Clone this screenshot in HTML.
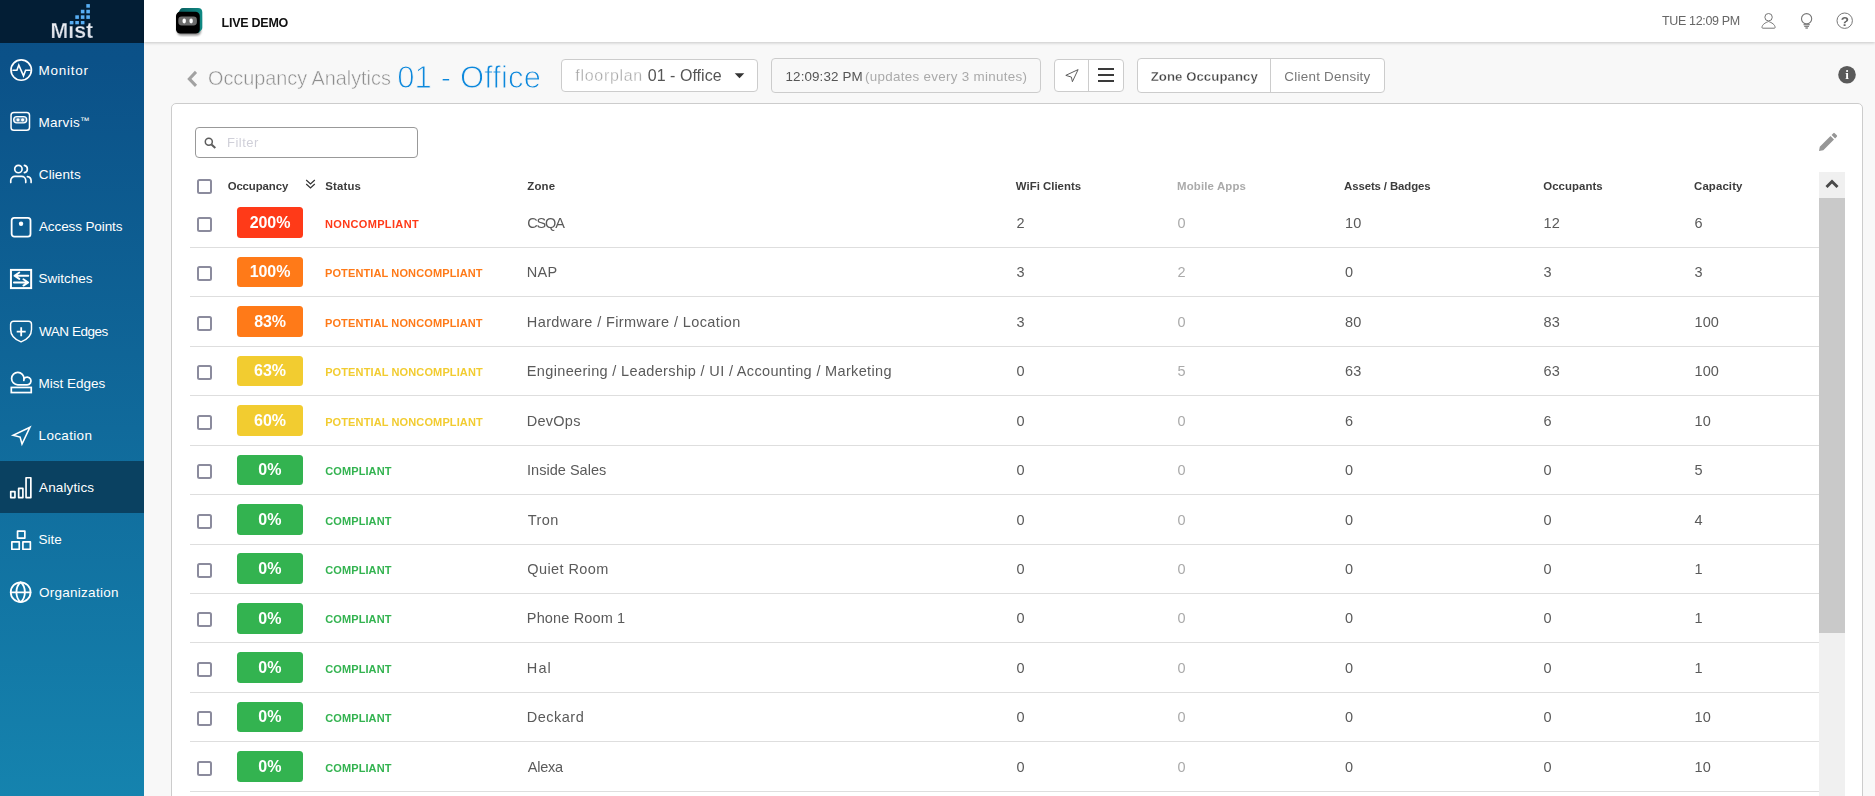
<!DOCTYPE html>
<html lang="en"><head><meta charset="utf-8"><title>Occupancy Analytics</title>
<style>
*{box-sizing:border-box;margin:0;padding:0}
html,body{width:1875px;height:796px;overflow:hidden;background:#f8f8f8;font-family:"Liberation Sans",sans-serif;color:#555}
body{position:relative}
#main{position:absolute;left:0;top:0;width:1875px;height:796px;will-change:transform}
.abs{position:absolute}
/* sidebar */
#side{position:absolute;left:0;top:0;width:144px;height:796px;background:linear-gradient(180deg,#0b5087 0px,#0b5188 60px,#1583ae 796px)}
#logo{position:absolute;left:0;top:0;width:144px;height:43px;background:#031e35}
.nav{position:absolute;left:0;width:144px;height:52.2px}
.nav.act{background:#0a4161}
.ni{position:absolute;left:10px;width:24px;height:24px;overflow:visible;fill:none;stroke:#fff;stroke-linejoin:round;stroke-linecap:round}
.nt{position:absolute;left:39px;top:19px;font-size:13.5px;line-height:16px;color:#fff;white-space:nowrap}
/* topbar */
#top{position:absolute;left:144px;top:0;width:1731px;height:42px;background:#fff;box-shadow:0 1px 3px rgba(0,0,0,.2)}
#live{position:absolute;left:222px;top:14.500px;font-size:12.500px;line-height:16px;font-weight:bold;color:#111;white-space:nowrap}
#clock{position:absolute;left:1662px;top:13px;font-size:12.5px;line-height:16px;color:#666;white-space:nowrap}
/* header row */
#ttl1{position:absolute;left:209px;top:65.1px;font-size:20.6px;line-height:26px;color:#8e8e8e;white-space:nowrap;-webkit-text-stroke:.5px #f8f8f8;transform:scaleX(.963);transform-origin:0 0}
#ttl2{position:absolute;left:398px;top:59.2px;font-size:31px;line-height:38px;color:#0c88dc;white-space:nowrap;-webkit-text-stroke:.95px #f8f8f8}
.box{position:absolute;border:1px solid #ccc;border-radius:4px;background:#fff}
.t{position:absolute;white-space:nowrap}
/* panel */
#panel{position:absolute;left:171px;top:103px;width:1692px;height:720px;background:#fff;border:1px solid #ccc;border-radius:5px}
#filter{position:absolute;left:195px;top:127px;width:223px;height:31px;border:1px solid #999;border-radius:4px;background:#fff}
.hd{position:absolute;top:179px;font-size:11.4px;line-height:14px;font-weight:bold;color:#3c3c3c;white-space:nowrap}
.cb{position:absolute;left:197px;width:15px;height:15px;border:2px solid #8b8b9d;border-radius:2.5px;background:#fff}
.row{position:absolute;left:0;width:1875px;height:50px}
.row:after{content:"";position:absolute;left:190px;width:1629px;bottom:0;height:1px;background:#dedede}
.badge{position:absolute;left:237px;top:9px;width:66px;height:31px;border-radius:3.5px;color:#fff;font-weight:bold;font-size:16px;line-height:31.4px;text-align:center;}
.st{position:absolute;left:325.5px;top:19.3px;font-size:11px;line-height:14px;font-weight:bold;white-space:nowrap}
.c{position:absolute;top:16.4px;font-size:14.5px;line-height:18px;color:#5a5a5a;white-space:nowrap}
.zone{left:527.5px}.wifi{left:1016.6px}.mob{left:1177.6px;color:#aaa}.ast{left:1345.1px}.occ{left:1543.6px}.cap{left:1694.6px}
#nt-monitor{letter-spacing:0.735px;margin-left:-0.50px}
#nt-marvis{letter-spacing:0.324px;margin-left:-0.63px}
#nt-clients{letter-spacing:0.101px;margin-left:-0.23px}
#nt-ap{letter-spacing:-0.105px;margin-left:-0.07px}
#nt-sw{letter-spacing:0.023px;margin-left:-0.61px}
#nt-wan{letter-spacing:-0.459px;margin-left:-0.02px}
#nt-me{letter-spacing:0.019px;margin-left:-0.58px}
#nt-loc{letter-spacing:0.321px;margin-left:-0.40px}
#nt-an{letter-spacing:0.113px;margin-left:0.09px}
#nt-site{letter-spacing:-0.008px;margin-left:-0.44px}
#nt-org{letter-spacing:0.268px;margin-left:-0.04px}
#live{letter-spacing:-0.247px;margin-left:-0.47px}
#clock{letter-spacing:-0.325px;margin-left:-0.13px}
#ttl1{letter-spacing:-0.008px;margin-left:-0.84px}
#ttl2{letter-spacing:0.135px;margin-left:-0.82px}
#fp{letter-spacing:0.690px;margin-left:-0.15px}
#ddo{letter-spacing:0.042px;margin-left:-0.30px}
#tm{letter-spacing:0.110px;margin-left:-0.45px}
#upd{letter-spacing:0.303px;margin-left:-0.63px}
#zo{letter-spacing:0.061px;margin-left:-0.32px}
#cd{letter-spacing:0.257px;margin-left:-0.67px}
#flt{letter-spacing:0.503px;margin-left:-1.07px}
#h-occ{letter-spacing:-0.100px;margin-left:-0.38px}
#h-st{letter-spacing:0.182px;margin-left:-0.28px}
#h-zone{letter-spacing:0.229px;margin-left:-0.25px}
#h-wifi{letter-spacing:0.012px;margin-left:-0.16px}
#h-mob{letter-spacing:0.161px;margin-left:-0.01px}
#h-ast{letter-spacing:-0.112px;margin-left:0.11px}
#h-occu{letter-spacing:0.053px;margin-left:0.32px}
#h-cap{letter-spacing:0.123px;margin-left:0.07px}
#s0{letter-spacing:0.350px;margin-left:-0.54px}
#s1{letter-spacing:0.121px;margin-left:-0.54px}
#s2{letter-spacing:0.121px;margin-left:-0.54px}
#s3{letter-spacing:0.123px;margin-left:-0.39px}
#s4{letter-spacing:0.123px;margin-left:-0.39px}
#z0{letter-spacing:-1.140px;margin-left:-0.26px}
#z1{letter-spacing:0.261px;margin-left:-0.66px}
#z2{letter-spacing:0.384px;margin-left:-0.66px}
#z3{letter-spacing:0.341px;margin-left:-0.66px}
#z4{letter-spacing:0.231px;margin-left:-0.66px}
#z5{letter-spacing:0.026px;margin-left:-0.53px}
#z6{letter-spacing:0.484px;margin-left:0.20px}
#z7{letter-spacing:0.424px;margin-left:-0.28px}
#z8{letter-spacing:0.146px;margin-left:-0.66px}
#z9{letter-spacing:1.068px;margin-left:-0.66px}
#z10{letter-spacing:0.485px;margin-left:-0.66px}
#z11{letter-spacing:-0.233px;margin-left:0.24px}
#s5{letter-spacing:0.089px;margin-left:-0.20px}
#s6{letter-spacing:0.089px;margin-left:-0.20px}
#s7{letter-spacing:0.089px;margin-left:-0.20px}
#s8{letter-spacing:0.089px;margin-left:-0.20px}
#s9{letter-spacing:0.089px;margin-left:-0.20px}
#s10{letter-spacing:0.089px;margin-left:-0.20px}
#s11{letter-spacing:0.089px;margin-left:-0.20px}
#b0{letter-spacing:-0.088px;margin-left:0.00px}
#b1{letter-spacing:-0.091px;margin-left:0.00px}
#b2{letter-spacing:-0.151px;margin-left:0.00px}
#b3{letter-spacing:-0.073px;margin-left:0.00px}
#b4{letter-spacing:-0.073px;margin-left:0.00px}
#b5{letter-spacing:0.182px;margin-left:0.00px}
#b6{letter-spacing:0.182px;margin-left:0.00px}
#b7{letter-spacing:0.182px;margin-left:0.00px}
#b8{letter-spacing:0.182px;margin-left:0.00px}
#b9{letter-spacing:0.182px;margin-left:0.00px}
#b10{letter-spacing:0.182px;margin-left:0.00px}
#b11{letter-spacing:0.182px;margin-left:0.00px}

</style></head><body>
<div id="side">
<div id="logo">
<svg class="abs" style="left:50px;top:3px;will-change:transform" width="48" height="40" viewBox="0 0 48 40">
<defs><linearGradient id="mg" x1="0" y1="0" x2="0" y2="1"><stop offset="0" stop-color="#f6f7fa"/><stop offset="1" stop-color="#cfd5e1"/></linearGradient></defs>
<text x=".5" y="34.500" font-family="Liberation Sans, sans-serif" font-weight="bold" font-size="22.200" fill="url(#mg)" stroke="#031e35" stroke-width=".25" textLength="42.600" lengthAdjust="spacingAndGlyphs">Mist</text>
<g fill="#58aef4">
<rect x="36.300" y="1.100" width="3.600" height="3.600"/>
<rect x="30.850" y="6.750" width="3.600" height="3.600"/><rect x="36.300" y="6.750" width="3.600" height="3.600"/>
<rect x="25.300" y="12.300" width="3.600" height="3.600"/><rect x="30.850" y="12.300" width="3.600" height="3.600"/><rect x="36.300" y="12.300" width="3.600" height="3.600"/>
<rect x="19.400" y="17.600" width="4.300" height="4" fill="#031e35"/>
<rect x="19.850" y="18" width="3.600" height="3.300"/><rect x="25.300" y="18" width="3.600" height="3.300"/><rect x="30.850" y="18" width="3.600" height="3.300"/>
</g>
</svg>
</div>
<div class="nav" style="top:43.50px"><svg class="ni" style="top:15.50px;stroke-width:1.7" width="24" height="24" viewBox="0 0 24 24"><circle cx="11.2" cy="11.05" r="10.2"/><path d="M3 11.3h3.9l1.9-5.2 4.7 10.8 2.100-5.600H20" stroke-width="1.6" stroke-linejoin="miter"/></svg><span class="nt" id="nt-monitor">Monitor</span></div>
<div class="nav" style="top:95.70px"><svg class="ni" style="top:15.30px;stroke-width:1.5" width="24" height="24" viewBox="0 0 24 24"><rect x="1.05" y="1.55" width="18.45" height="17.8" rx="2.8"/><rect x="3.7" y="5.65" width="13" height="6.25" rx="3.1" stroke-width="1.4" fill="rgba(255,255,255,.28)"/><circle cx="8" cy="8.8" r="1.6" fill="#fff" stroke="none"/><circle cx="12.6" cy="8.8" r="1.6" fill="#fff" stroke="none"/></svg><span class="nt" id="nt-marvis">Marvis<span style="font-size:9.500px;line-height:0;position:relative;top:-3.200px">™</span></span></div>
<div class="nav" style="top:147.90px"><svg class="ni" style="top:15.60px;stroke-width:1.65" width="24" height="24" viewBox="0 0 24 24"><circle cx="8.4" cy="6" r="3.7"/><path d="M.75 19.600v-2a4.200 4.200 0 0 1 4.200-4.200h6.600a4.200 4.200 0 0 1 4.200 4.200v2"/><path d="M14.400 2.370A3.700 3.700 0 0 1 14.400 9.630"/><path d="M17.400 13.600a4.300 4.300 0 0 1 3.700 4.200v1.800"/></svg><span class="nt" id="nt-clients">Clients</span></div>
<div class="nav" style="top:200.10px"><svg class="ni" style="top:15.90px;stroke-width:1.8" width="24" height="24" viewBox="0 0 24 24"><rect x="1.65" y="1.8" width="18.85" height="18.8" rx="2.6"/><circle cx="11.040" cy="7.8" r="2.2" fill="#fff" stroke="none"/></svg><span class="nt" id="nt-ap">Access Points</span></div>
<div class="nav" style="top:252.30px"><svg class="ni" style="top:15.70px;stroke-width:1.9" width="24" height="24" viewBox="0 0 24 24"><rect x=".95" y="1.9" width="20.2" height="18.2" stroke-width="2" stroke-linejoin="miter"/><path d="M18.300 7.700H4.600M9.300 4.500L4.500 7.700l4.800 3.200"/><path d="M3.900 14.450H18M13.400 11.300l4.800 3.150-4.800 3.150"/></svg><span class="nt" id="nt-sw">Switches</span></div>
<div class="nav" style="top:304.50px"><svg class="ni" style="top:15.00px;stroke-width:1.45" width="24" height="24" viewBox="0 0 24 24"><path d="M3.600 1.200H18.500a3 3 0 0 1 3 3V9.500C21.500 15.500 16.500 19.800 11.050 21.900C5.600 19.800 .6 15.500 .6 9.500V4.200a3 3 0 0 1 3-3z"/><path d="M11.200 7.200v9M6.700 11.700h9" stroke-width="1.8" stroke-linecap="butt"/></svg><span class="nt" id="nt-wan">WAN Edges</span></div>
<div class="nav" style="top:356.70px"><svg class="ni" style="top:14.80px;stroke-width:1.7" width="24" height="24" viewBox="0 0 24 24"><path d="M7.800 13.800A6.200 6.200 0 1 1 14 7.790A3.850 3.850 0 1 1 17.150 13.850Z"/><path d="M14 7.790A6.200 6.200 0 0 1 13.800 9.500"/><rect x="1.300" y="16.450" width="19.950" height="5.100" stroke-linejoin="miter"/></svg><span class="nt" id="nt-me">Mist Edges</span></div>
<div class="nav" style="top:408.90px"><svg class="ni" style="top:15.10px;stroke-width:1.55" width="24" height="24" viewBox="0 0 24 24"><path d="M20 3.200L3.100 11.200l7 1.900L12 20Z" stroke-linejoin="miter"/></svg><span class="nt" id="nt-loc">Location</span></div>
<div class="nav act" style="top:461.10px"><svg class="ni" style="top:14.90px;stroke-width:1.7" width="24" height="24" viewBox="0 0 24 24"><rect x=".75" y="15.550" width="4.200" height="6"/><rect x="8.650" y="12.450" width="4.250" height="9.100"/><rect x="16.050" y="1.750" width="4.800" height="19.800"/></svg><span class="nt" id="nt-an">Analytics</span></div>
<div class="nav" style="top:513.30px"><svg class="ni" style="top:15.70px;stroke-width:1.7" width="24" height="24" viewBox="0 0 24 24"><rect x="7.550" y="2.050" width="7.300" height="7"/><rect x="1.850" y="12.950" width="7.400" height="7.300"/><rect x="12.900" y="12.950" width="7.450" height="7.300"/></svg><span class="nt" id="nt-site">Site</span></div>
<div class="nav" style="top:565.50px"><svg class="ni" style="top:15.00px;stroke-width:1.8" width="24" height="24" viewBox="0 0 24 24"><circle cx="10.650" cy="11.200" r="9.900"/><path d="M.8 11.300h19.700"/><path d="M10.650 1.300C5 6 5 16.400 10.650 21.100C16.300 16.400 16.300 6 10.650 1.300z"/></svg><span class="nt" id="nt-org">Organization</span></div>
</div>
<div id="main">
<div id="top"></div>
<svg class="abs" style="left:174px;top:6px" width="31" height="31" viewBox="0 0 31 31">
<defs><linearGradient id="tg" x1="0" y1="0" x2="1" y2="0"><stop offset="0" stop-color="#0a5a5c"/><stop offset="1" stop-color="#0f8a84"/></linearGradient><filter id="sh" x="-20%" y="-20%" width="140%" height="150%"><feGaussianBlur stdDeviation="1"/></filter></defs>
<rect x="3" y="8" width="24" height="21.500" rx="4.500" fill="#000" opacity=".45" filter="url(#sh)"/>
<path d="M3 8.500L6.300 3.200Q7.200 2 9 2H24Q28.300 2 28.300 6.300V21.500Q28.300 23 27.300 24L24.500 27Z" fill="url(#tg)"/>
<rect x="2" y="5.800" width="23.800" height="21.700" rx="4.300" fill="#000"/>
<rect x="4.300" y="10.500" width="18.600" height="9" rx="3.400" fill="#6c6c6c"/>
<ellipse cx="10.200" cy="15" rx="1.750" ry="2.400" fill="#fff"/><ellipse cx="17.100" cy="15" rx="1.750" ry="2.400" fill="#fff"/>
</svg>
<div id="live">LIVE DEMO</div>
<div id="clock">TUE 12:09 PM</div>
<svg class="abs" style="left:1759px;top:11px" width="20" height="20" viewBox="0 0 20 20" fill="none" stroke="#777" stroke-width="1"><circle cx="9.560" cy="6.200" r="3.700"/><path d="M3 16.500C3 13.500 6.500 11.600 9.560 10.500C12.600 11.600 16.100 13.500 16.100 16.500Q16.100 17.200 15.400 17.200H3.700Q3 17.200 3 16.500z" stroke-linejoin="round"/></svg>
<svg class="abs" style="left:1797px;top:11px" width="20" height="20" viewBox="0 0 20 20" fill="none" stroke="#777" stroke-width="1.100"><circle cx="9.600" cy="7.700" r="5.100"/><path d="M6.500 13.700h6.300M7.200 15.400h4.800M8.400 17h2.500" stroke-width="1.300" stroke="#888"/></svg>
<svg class="abs" style="left:1835px;top:11px" width="20" height="20" viewBox="0 0 20 20"><circle cx="9.700" cy="9.700" r="7.700" fill="none" stroke="#777" stroke-width="1"/><text x="9.800" y="14.600" text-anchor="middle" font-family="Liberation Sans, sans-serif" font-weight="bold" font-size="13.500" fill="#666">?</text></svg>

<!-- header row -->
<svg class="abs" style="left:184px;top:69px" width="16" height="20" viewBox="0 0 16 20" fill="none" stroke="#a2a2a2" stroke-width="3"><path d="M12 2.900L5.300 9.900l6.700 7"/></svg>
<div id="ttl1">Occupancy Analytics</div>
<div id="ttl2">01 - Office</div>

<div class="box" style="left:561px;top:59px;width:197px;height:33px"></div>
<div class="t" id="fp" style="left:575.500px;top:66px;font-size:16px;line-height:20px;color:#a4a4a4;-webkit-text-stroke:.35px #fff">floorplan</div>
<div class="t" id="ddo" style="left:648px;top:66px;font-size:16px;line-height:20px;color:#555">01 - Office</div>
<svg class="abs" style="left:734px;top:73px" width="11" height="6" viewBox="0 0 11 6"><path d="M.7.200h9.600L5.500 5.300z" fill="#333"/></svg>

<div class="box" style="left:771px;top:58px;width:270px;height:35px;background:#f8f8f8"></div>
<div class="t" id="tm" style="left:786px;top:69px;font-size:13.400px;line-height:16px;color:#555">12:09:32 PM</div>
<div class="t" id="upd" style="left:865.500px;top:69px;font-size:13.400px;line-height:16px;color:#aaa">(updates every 3 minutes)</div>

<div class="box" style="left:1054px;top:59px;width:70px;height:33px"></div>
<div class="abs" style="left:1088px;top:60px;width:1px;height:31px;background:#ccc"></div>
<svg class="abs" style="left:1064px;top:67px" width="16" height="16" viewBox="0 0 16 16" fill="none" stroke="#555" stroke-width=".95" stroke-linejoin="round"><path d="M14.100 2.600L1.800 8.350l5.600 1.750l1 4.600z"/></svg>
<div class="abs" style="left:1098px;top:68px;width:16px;height:1.600px;background:#3a3a3a"></div>
<div class="abs" style="left:1098px;top:74.200px;width:16px;height:1.600px;background:#3a3a3a"></div>
<div class="abs" style="left:1098px;top:80.300px;width:16px;height:1.600px;background:#3a3a3a"></div>

<div class="box" style="left:1137px;top:58px;width:248px;height:35px"></div>
<div class="abs" style="left:1270px;top:59px;width:1px;height:33px;background:#ccc"></div>
<div class="t" id="zo" style="left:1151px;top:69px;font-size:13.200px;line-height:16px;color:#444;font-weight:bold;-webkit-text-stroke:.3px #fff">Zone Occupancy</div>
<div class="t" id="cd" style="left:1285px;top:69px;font-size:13.400px;line-height:16px;color:#777">Client Density</div>

<svg class="abs" style="left:1837px;top:65px" width="20" height="20" viewBox="0 0 20 20"><circle cx="10" cy="9.800" r="8.800" fill="#5a5a5a"/><text x="10" y="14.300" text-anchor="middle" font-family="Liberation Serif, serif" font-weight="bold" font-size="13" fill="#fff">i</text></svg>

<!-- panel -->
<div id="panel"></div>
<div id="filter"></div>
<svg class="abs" style="left:204px;top:136.600px" width="13" height="12" viewBox="0 0 13 12" fill="none" stroke="#5c5c5c" stroke-width="1.500"><circle cx="4.800" cy="4.800" r="3.500"/><path d="M7.500 7.500l3.800 3.500" stroke-width="2"/></svg>
<div class="t" id="flt" style="left:228px;top:135px;font-size:13px;line-height:16px;color:#d0d0d9">Filter</div>
<svg class="abs" style="left:1817px;top:131px" width="22" height="22" viewBox="0 0 22 22"><path d="M2 20l.8-4.300L13.500 5l3.500 3.500L6.300 19.200zM14.600 3.900l1.700-1.700a1 1 0 0 1 1.400 0l2.100 2.100a1 1 0 0 1 0 1.400l-1.700 1.700z" fill="#969696"/></svg>

<!-- table head -->
<span class="cb" style="top:179px"></span>
<div class="hd" id="h-occ" style="left:228px">Occupancy</div>
<svg class="abs" style="left:305px;top:179px" width="11" height="11" viewBox="0 0 11 11" fill="none" stroke="#333" stroke-width="1.200"><path d="M1.200 1l4.300 4 4.300-4M1.200 5l4.300 4 4.300-4"/></svg>
<div class="hd" id="h-st" style="left:325.500px">Status</div>
<div class="hd" id="h-zone" style="left:527.500px">Zone</div>
<div class="hd" id="h-wifi" style="left:1016px">WiFi Clients</div>
<div class="hd" id="h-mob" style="left:1177px;color:#aaa">Mobile Apps</div>
<div class="hd" id="h-ast" style="left:1344px">Assets / Badges</div>
<div class="hd" id="h-occu" style="left:1543px">Occupants</div>
<div class="hd" id="h-cap" style="left:1694px">Capacity</div>

<div class="row" style="top:198px">
<span class="cb" style="top:19px"></span>
<span class="badge" style="top:9px;height:31px;line-height:31.4px;background:#ff3a18"><span id="b0">200%</span></span>
<span class="st" id="s0" style="color:#ff3a18">NONCOMPLIANT</span>
<span class="c zone" id="z0">CSQA</span>
<span class="c wifi">2</span>
<span class="c mob">0</span>
<span class="c ast">10</span>
<span class="c occ">12</span>
<span class="c cap">6</span>
</div>
<div class="row" style="top:247px">
<span class="cb" style="top:19px"></span>
<span class="badge" style="top:10px;height:30px;line-height:30.4px;background:#ff7a18"><span id="b1">100%</span></span>
<span class="st" id="s1" style="color:#ff7a18">POTENTIAL NONCOMPLIANT</span>
<span class="c zone" id="z1">NAP</span>
<span class="c wifi">3</span>
<span class="c mob">2</span>
<span class="c ast">0</span>
<span class="c occ">3</span>
<span class="c cap">3</span>
</div>
<div class="row" style="top:297px">
<span class="cb" style="top:19px"></span>
<span class="badge" style="top:9px;height:31px;line-height:31.4px;background:#ff7a18"><span id="b2">83%</span></span>
<span class="st" id="s2" style="color:#ff7a18">POTENTIAL NONCOMPLIANT</span>
<span class="c zone" id="z2">Hardware / Firmware / Location</span>
<span class="c wifi">3</span>
<span class="c mob">0</span>
<span class="c ast">80</span>
<span class="c occ">83</span>
<span class="c cap">100</span>
</div>
<div class="row" style="top:346px">
<span class="cb" style="top:19px"></span>
<span class="badge" style="top:10px;height:30px;line-height:30.4px;background:#f2cc30"><span id="b3">63%</span></span>
<span class="st" id="s3" style="color:#f2cc30">POTENTIAL NONCOMPLIANT</span>
<span class="c zone" id="z3">Engineering / Leadership / UI / Accounting / Marketing</span>
<span class="c wifi">0</span>
<span class="c mob">5</span>
<span class="c ast">63</span>
<span class="c occ">63</span>
<span class="c cap">100</span>
</div>
<div class="row" style="top:396px">
<span class="cb" style="top:19px"></span>
<span class="badge" style="top:9px;height:31px;line-height:31.4px;background:#f2cc30"><span id="b4">60%</span></span>
<span class="st" id="s4" style="color:#f2cc30">POTENTIAL NONCOMPLIANT</span>
<span class="c zone" id="z4">DevOps</span>
<span class="c wifi">0</span>
<span class="c mob">0</span>
<span class="c ast">6</span>
<span class="c occ">6</span>
<span class="c cap">10</span>
</div>
<div class="row" style="top:445px">
<span class="cb" style="top:19px"></span>
<span class="badge" style="top:10px;height:30px;line-height:30.4px;background:#33b350"><span id="b5">0%</span></span>
<span class="st" id="s5" style="color:#33b350">COMPLIANT</span>
<span class="c zone" id="z5">Inside Sales</span>
<span class="c wifi">0</span>
<span class="c mob">0</span>
<span class="c ast">0</span>
<span class="c occ">0</span>
<span class="c cap">5</span>
</div>
<div class="row" style="top:495px">
<span class="cb" style="top:19px"></span>
<span class="badge" style="top:9px;height:31px;line-height:31.4px;background:#33b350"><span id="b6">0%</span></span>
<span class="st" id="s6" style="color:#33b350">COMPLIANT</span>
<span class="c zone" id="z6">Tron</span>
<span class="c wifi">0</span>
<span class="c mob">0</span>
<span class="c ast">0</span>
<span class="c occ">0</span>
<span class="c cap">4</span>
</div>
<div class="row" style="top:544px">
<span class="cb" style="top:19px"></span>
<span class="badge" style="top:9px;height:31px;line-height:31.4px;background:#33b350"><span id="b7">0%</span></span>
<span class="st" id="s7" style="color:#33b350">COMPLIANT</span>
<span class="c zone" id="z7">Quiet Room</span>
<span class="c wifi">0</span>
<span class="c mob">0</span>
<span class="c ast">0</span>
<span class="c occ">0</span>
<span class="c cap">1</span>
</div>
<div class="row" style="top:593px">
<span class="cb" style="top:19px"></span>
<span class="badge" style="top:10px;height:31px;line-height:31.4px;background:#33b350"><span id="b8">0%</span></span>
<span class="st" id="s8" style="color:#33b350">COMPLIANT</span>
<span class="c zone" id="z8">Phone Room 1</span>
<span class="c wifi">0</span>
<span class="c mob">0</span>
<span class="c ast">0</span>
<span class="c occ">0</span>
<span class="c cap">1</span>
</div>
<div class="row" style="top:643px">
<span class="cb" style="top:19px"></span>
<span class="badge" style="top:9px;height:31px;line-height:31.4px;background:#33b350"><span id="b9">0%</span></span>
<span class="st" id="s9" style="color:#33b350">COMPLIANT</span>
<span class="c zone" id="z9">Hal</span>
<span class="c wifi">0</span>
<span class="c mob">0</span>
<span class="c ast">0</span>
<span class="c occ">0</span>
<span class="c cap">1</span>
</div>
<div class="row" style="top:692px">
<span class="cb" style="top:19px"></span>
<span class="badge" style="top:10px;height:30px;line-height:30.4px;background:#33b350"><span id="b10">0%</span></span>
<span class="st" id="s10" style="color:#33b350">COMPLIANT</span>
<span class="c zone" id="z10">Deckard</span>
<span class="c wifi">0</span>
<span class="c mob">0</span>
<span class="c ast">0</span>
<span class="c occ">0</span>
<span class="c cap">10</span>
</div>
<div class="row" style="top:742px">
<span class="cb" style="top:19px"></span>
<span class="badge" style="top:9px;height:31px;line-height:31.4px;background:#33b350"><span id="b11">0%</span></span>
<span class="st" id="s11" style="color:#33b350">COMPLIANT</span>
<span class="c zone" id="z11">Alexa</span>
<span class="c wifi">0</span>
<span class="c mob">0</span>
<span class="c ast">0</span>
<span class="c occ">0</span>
<span class="c cap">10</span>
</div>

<!-- scrollbar -->
<div class="abs" style="left:1819px;top:172px;width:25.500px;height:624px;background:#f0f0f0"></div>
<div class="abs" style="left:1819px;top:197.700px;width:25.500px;height:435px;background:#c9c9c9"></div>
<svg class="abs" style="left:1825px;top:178px" width="14" height="10" viewBox="0 0 14 10" fill="none" stroke="#4a4a4a" stroke-width="2.900"><path d="M1.500 9L7 3.500 12.500 9"/></svg>
</div>
</body></html>
